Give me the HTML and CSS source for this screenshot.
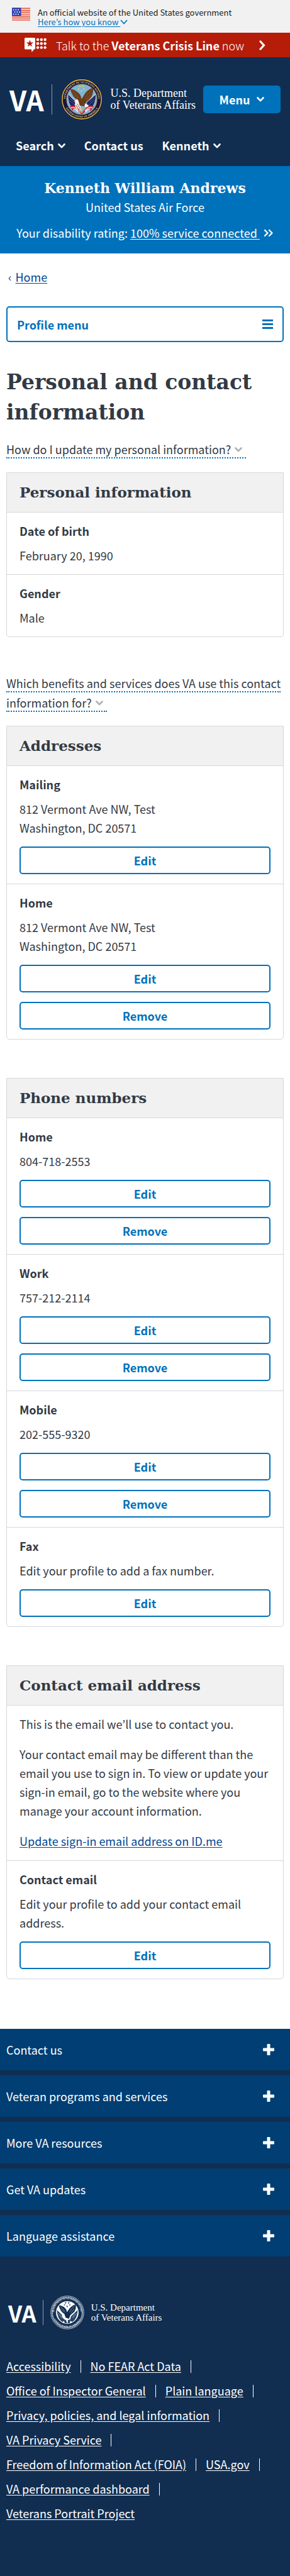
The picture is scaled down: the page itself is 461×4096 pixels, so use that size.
FILE: index.html
```html
<!DOCTYPE html>
<html lang="en">
<head>
<meta charset="utf-8">
<meta name="viewport" content="width=device-width, initial-scale=1">
<title>Personal and contact information | Veterans Affairs</title>
<link rel="stylesheet" href="styles.css">
</head>
<body>
<svg class="defs" aria-hidden="true">
  <symbol id="chevron" viewBox="0 0 12 8"><path d="M1.500 1.500 6 6.200 10.500 1.500" fill="none" stroke="currentColor" stroke-width="2.600" stroke-linecap="round" stroke-linejoin="round"/></symbol>
  <symbol id="plus" viewBox="0 0 18 18"><path d="M7.500 0h3q1 0 1 1v5.500H17q1 0 1 1v3q0 1-1 1h-5.500V17q0 1-1 1h-3q-1 0-1-1v-5.500H1q-1 0-1-1v-3q0-1 1-1h5.500V1q0-1 1-1z" fill="currentColor"/></symbol>
  <symbol id="star" viewBox="-5 -5 10 10"><path d="M0-5 1.200-1.600 4.800-1.600 1.900.6 2.900 4 0 1.900-2.900 4-1.900.6-4.800-1.600-1.200-1.600z" fill="currentColor"/></symbol>
</svg>

<div class="gov-banner">
  <svg class="flag" viewBox="0 0 30 21" aria-hidden="true">
    <path fill="#fff" d="M0 0h30v21H0z"/>
    <path stroke="#e0492f" stroke-width="1.700" d="M0 .9h30M0 4.100h30M0 7.300h30M0 10.500h30M0 13.700h30M0 16.900h30M0 20.100h30"/>
    <path fill="#2a3fb0" d="M0 0h15v13.500H0z"/>
    <path stroke="#fff" stroke-width="1.700" stroke-dasharray="1.700 2.200" d="M1.800 3.400h10.500M3.800 7h10.500M1.800 10.600h10.500"/>
  </svg>
  <div class="gov-text">
    <span>An official website of the United States government</span>
    <button type="button" class="gov-toggle"><span class="u">Here’s how you know </span><svg class="thin" viewBox="0 0 12 8"><path d="M1 1 6 6.500 11 1" fill="none" stroke="currentColor" stroke-width="1.700"/></svg></button>
  </div>
</div>

<a class="crisis" href="#crisis">
  <svg class="crisis-icon" viewBox="0 0 35 23" aria-hidden="true">
    <path fill="#fff" d="M1.500 0H15.500Q17 0 17 1.500V17Q17 18.500 15.500 18.500H15L11.500 23 11 18.500H1.500Q0 18.500 0 17V1.500Q0 0 1.500 0z"/>
    <use href="#star" x="2.500" y="3.500" width="12" height="12" color="#b51d09"/>
    <g fill="#fff"><circle cx="21" cy="3" r="2.200"/><circle cx="26.800" cy="3" r="2.200"/><circle cx="32.600" cy="3" r="2.200"/><circle cx="21" cy="9.300" r="2.200"/><circle cx="26.800" cy="9.300" r="2.200"/><circle cx="32.600" cy="9.300" r="2.200"/><circle cx="21" cy="15.600" r="2.200"/><circle cx="26.800" cy="15.600" r="2.200"/><circle cx="32.600" cy="15.600" r="2.200"/></g>
  </svg>
  <span>Talk to the <b>Veterans Crisis Line</b> now</span>
  <svg class="crisis-arrow" viewBox="0 0 10 16"><path d="M2 2 7.500 8 2 14" fill="none" stroke="currentColor" stroke-width="3.200" stroke-linecap="round"/></svg>
</a>

<header class="site-header">
  <div class="brand-row">
    <a class="brand" href="#home" aria-label="VA home">
      <span class="va">VA</span>
      <svg class="seal" viewBox="0 0 108 108" aria-hidden="true">
        <defs>
          <path id="arc-top" d="M11.500 54a42.500 42.500 0 0 1 85 0"/>
          <path id="arc-bottom" d="M6.500 54a47.500 47.500 0 0 0 95 0"/>
        </defs>
        <circle cx="54" cy="54" r="53.500" fill="#1b1440"/>
        <circle cx="54" cy="54" r="51" fill="none" stroke="#d9b23c" stroke-width="2.600"/>
        <circle cx="54" cy="54" r="39.500" fill="#7fb5d3" stroke="#c9a43a" stroke-width="1"/>
        <g class="seal-text" fill="#dccb86">
          <text><textPath href="#arc-top" startOffset="50%" text-anchor="middle">DEPARTMENT OF VETERANS AFFAIRS</textPath></text>
          <text><textPath href="#arc-bottom" startOffset="50%" text-anchor="middle">UNITED STATES OF AMERICA</textPath></text>
        </g>
        <g color="#f2d45c"><use href="#star" x="46" y="17" width="6" height="6"/><use href="#star" x="54" y="17" width="6" height="6"/><use href="#star" x="43" y="24" width="6" height="6"/><use href="#star" x="57" y="24" width="6" height="6"/><use href="#star" x="50" y="29" width="6" height="6"/></g>
        <path fill="#1f2560" d="M19 41 42 62 44 76 26 72Q18 60 19 41zM90 41 68 60 66 76 82 72Q90 60 90 41z"/>
        <path stroke="#fff" stroke-width="1.300" stroke-dasharray="1.300 3" d="M22 50 34 62M22 57 36 69M28 52 38 61M86 50 74 62M86 57 72 69M81 50 72 58"/>
        <path stroke="#fff" stroke-width="1.500" d="M19 41 42 62M90 41 68 60"/>
        <path fill="#c3273b" d="M23 72Q32 68 42 74L54 90 66 74Q76 68 85 72L78 84Q66 76 62 86L54 94 46 86Q42 76 30 83z"/>
        <path stroke="#fff" stroke-width="1.800" fill="none" d="M26 76Q36 72 46 84M32 80Q38 78 44 87M82 76Q72 72 62 84M76 80Q70 78 64 87"/>
        <path fill="#6a3b1c" d="M24 27Q36 28 45 37Q52 43 53 53Q58 47 61 41Q68 29 82 24Q86 34 79 48Q74 56 66 60L60 72 48 70 44 55Q30 51 24 27z"/>
        <path stroke="#9b673a" stroke-width="1" fill="none" d="M28 31Q40 38 46 52M30 38Q38 43 43 51M80 29Q68 38 62 52M80 37Q72 44 66 56M77 46 68 57"/>
        <path fill="#f5f3ee" d="M35 60Q36 54 43 54L46 60 48 68Q54 78 51 84L39 76Q34 68 37 63z"/>
        <path stroke="#c3273b" stroke-width="1.600" d="M38 68 47 82M42 65 50 79"/>
        <path fill="#f5f3ee" d="M62 65Q68 66 72 70Q70 76 62 74z"/>
        <path fill="#e0b63a" d="M35 58 38 57 36 61zM47 77 50 76 50 91 47 91zM53 76 56 76 54 90 52 90z"/>
      </svg>
      <span class="dept">U.S. Department<br>of Veterans Affairs</span>
    </a>
    <button type="button" class="menu-btn">Menu <svg class="chev"><use href="#chevron"/></svg></button>
  </div>
  <nav class="quick-nav">
    <button type="button">Search <svg class="chev"><use href="#chevron"/></svg></button>
    <a href="#contact">Contact us</a>
    <button type="button">Kenneth <svg class="chev"><use href="#chevron"/></svg></button>
  </nav>
</header>

<section class="name-tag">
  <p class="name">Kenneth William Andrews</p>
  <p class="branch">United States Air Force</p>
  <p class="rating"><span>Your disability rating: <a href="#rating">100% service connected&nbsp;</a></span>
    <svg class="dbl" viewBox="0 0 16 13"><path d="M2 2 6.500 6.500 2 11M9 2 13.500 6.500 9 11" fill="none" stroke="currentColor" stroke-width="2.300" stroke-linecap="round" stroke-linejoin="round"/></svg></p>
</section>

<main class="content">
  <nav class="crumb"><span>‹</span> <a href="#home">Home</a></nav>
  <button type="button" class="profile-menu">Profile menu
    <svg class="bars" viewBox="0 0 17 15"><path fill="currentColor" d="M0 0h17v3H0zM0 6h17v3H0zM0 12h17v3H0z"/></svg></button>
  <h1>Personal and contact information</h1>

  <div class="info first"><button type="button"><span>How do I update my personal information? <svg class="chev"><use href="#chevron"/></svg></span></button></div>

  <section class="card">
    <h2>Personal information</h2>
    <div class="row"><h3>Date of birth</h3><p>February 20, 1990</p></div>
    <div class="row"><h3>Gender</h3><p>Male</p></div>
  </section>

  <div class="info second"><button type="button"><span>Which benefits and services does VA use this contact information for? <svg class="chev"><use href="#chevron"/></svg></span></button></div>

  <section class="card">
    <h2>Addresses</h2>
    <div class="row"><h3>Mailing</h3><p>812 Vermont Ave NW, Test<br>Washington, DC 20571</p>
      <div class="actions"><button type="button">Edit</button></div></div>
    <div class="row"><h3>Home</h3><p>812 Vermont Ave NW, Test<br>Washington, DC 20571</p>
      <div class="actions"><button type="button">Edit</button><button type="button">Remove</button></div></div>
  </section>

  <section class="card">
    <h2>Phone numbers</h2>
    <div class="row"><h3>Home</h3><p>804-718-2553</p>
      <div class="actions"><button type="button">Edit</button><button type="button">Remove</button></div></div>
    <div class="row"><h3>Work</h3><p>757-212-2114</p>
      <div class="actions"><button type="button">Edit</button><button type="button">Remove</button></div></div>
    <div class="row"><h3>Mobile</h3><p>202-555-9320</p>
      <div class="actions"><button type="button">Edit</button><button type="button">Remove</button></div></div>
    <div class="row"><h3>Fax</h3><p>Edit your profile to add a fax number.</p>
      <div class="actions"><button type="button">Edit</button></div></div>
  </section>

  <section class="card">
    <h2>Contact email address</h2>
    <div class="row prose">
      <p>This is the email we’ll use to contact you.</p>
      <p>Your contact email may be different than the email you use to sign in. To view or update your sign-in email, go to the website where you manage your account information.</p>
      <p><a href="#idme">Update sign-in email address on ID.me</a></p>
    </div>
    <div class="row"><h3>Contact email</h3><p>Edit your profile to add your contact email address.</p>
      <div class="actions"><button type="button">Edit</button></div></div>
  </section>
</main>

<footer class="footer">
  <div class="accordion">
    <button type="button">Contact us <svg><use href="#plus"/></svg></button>
    <button type="button">Veteran programs and services <svg><use href="#plus"/></svg></button>
    <button type="button">More VA resources <svg><use href="#plus"/></svg></button>
    <button type="button">Get VA updates <svg><use href="#plus"/></svg></button>
    <button type="button">Language assistance <svg><use href="#plus"/></svg></button>
  </div>
  <a class="brand small" href="#home" aria-label="VA home">
    <span class="va">VA</span>
    <svg class="seal" viewBox="0 0 108 108" aria-hidden="true">
      <circle cx="54" cy="54" r="52.500" fill="#112e51" stroke="#e6eaef" stroke-width="1.500"/>
      <circle cx="54" cy="54" r="48" fill="none" stroke="#cdd5de" stroke-width="4.500" stroke-dasharray="1.700 1"/>
      <circle cx="54" cy="54" r="35.500" fill="#fff" stroke="#e6eaef"/>
      <g class="seal-text" fill="#e6eaef">
        <text><textPath href="#arc-top" startOffset="50%" text-anchor="middle">DEPARTMENT OF VETERANS AFFAIRS</textPath></text>
        <text><textPath href="#arc-bottom" startOffset="50%" text-anchor="middle">UNITED STATES OF AMERICA</textPath></text>
      </g>
      <g color="#112e51"><use href="#star" x="45" y="20" width="7" height="7"/><use href="#star" x="55" y="20" width="7" height="7"/><use href="#star" x="42" y="27" width="6" height="6"/><use href="#star" x="59" y="27" width="6" height="6"/><use href="#star" x="50" y="31" width="7" height="7"/></g>
      <path fill="#2a4465" d="M21 46 42 66 46 80 38 84Q22 74 21 46zM87 46 66 66 62 80 70 84Q86 74 87 46z"/>
      <path fill="#112e51" d="M27 31Q40 32 47 40Q52 45 53 53Q57 46 62 40Q70 31 81 28Q83 42 76 52L64 62 59 74 48 70 44 58Q30 50 27 31z"/>
      <path stroke="#c9d2dc" stroke-width="1" fill="none" d="M31 35Q42 42 47 53M33 43 43 52M77 33Q67 41 61 53M76 42 65 56M25 56 36 72M30 58 38 70M83 56 72 72M78 58 70 70"/>
      <path fill="#fff" d="M37 60Q41 56 45 60L50 76 42 74Q36 68 37 60z"/>
      <path fill="#2a4465" d="M42 76 50 78 53 88 46 88zM56 78 64 76 62 88 55 88z"/>
    </svg>
    <span class="dept">U.S. Department<br>of Veterans Affairs</span>
  </a>
  <ul class="links">
    <li><a href="#a">Accessibility</a></li>
    <li><a href="#b">No FEAR Act Data</a></li>
    <li><a href="#c">Office of Inspector General</a></li>
    <li><a href="#d">Plain language</a></li>
    <li><a href="#e">Privacy, policies, and legal information</a></li>
    <li><a href="#f">VA Privacy Service</a></li>
    <li><a href="#g">Freedom of Information Act (FOIA)</a></li>
    <li><a href="#h">USA.gov</a></li>
    <li><a href="#i">VA performance dashboard</a></li>
    <li><a href="#j">Veterans Portrait Project</a></li>
  </ul>
</footer>
</body>
</html>
```
FILE: styles.css
```css
:root {
  --navy: #112e51;
  --blue: #0071bb;
  --ink: #323a45;
  --line: #d6d7d9;
  --grey: #f1f1f1;
  --link: #004795;
  --sans: "Noto Sans CJK KR", "Noto Sans", sans-serif;
  --slab: "DejaVu Serif", serif;
}
* { box-sizing: border-box; }
body { margin: 0; background: #fff; color: var(--ink); font: 18px/30px var(--sans); }
h1, h2, h3, p, ul { margin: 0; padding: 0; }
button { font: inherit; color: inherit; background: none; border: 0; padding: 0; margin: 0; text-align: left; }
a { color: inherit; text-underline-offset: 2px; }
.defs { position: absolute; width: 0; height: 0; }
.chev { width: 12px; height: 8px; vertical-align: 3px; }

.gov-banner { display: flex; gap: 12px; height: 52px; padding: 12px 19px; background: var(--grey); font-size: 13px; line-height: 15px; color: #212121; }
.flag { width: 29px; height: 21px; }
.gov-text { display: flex; flex-direction: column; align-items: flex-start; }
.gov-toggle { display: flex; align-items: center; color: var(--blue); }
.gov-toggle .u { text-decoration: underline; text-underline-offset: 2px; white-space: pre; }
.thin { width: 12px; height: 8px; }

.crisis { display: flex; align-items: center; justify-content: center; height: 39px; background: #b51d09; color: #fff; text-decoration: none; font-weight: 300; }
.crisis b { font-weight: 700; }
.crisis-icon { width: 35px; height: 23px; margin-right: 15px; }
.crisis-arrow { width: 10px; height: 16px; margin-left: 24px; }

.site-header { background: var(--navy); color: #fff; padding: 34px 15px 18px; }
.brand-row { display: flex; align-items: center; justify-content: space-between; }
.brand { display: flex; align-items: center; text-decoration: none; color: #fff; }
.va { font-weight: 700; font-size: 44px; line-height: 48px; padding-right: 12px; border-right: 1px solid #8a99ad; }
.seal { width: 66px; height: 66px; margin: 0 13px 0 14px; }
.seal-text { font: 700 7px "Liberation Serif", serif; }
.dept { font: 18px/19px "Liberation Serif", serif; white-space: nowrap; }
.menu-btn { display: flex; align-items: center; justify-content: center; gap: 11px; width: 123px; height: 44px; border-radius: 5px; background: var(--blue); font-weight: 700; }
.quick-nav { display: flex; gap: 30px; padding: 25px 10px 0; font-weight: 700; }
.quick-nav a { text-decoration: none; }
.quick-nav .chev { margin-left: 2px; }

.name-tag { background: var(--blue); color: #fff; text-align: center; padding: 20px 16px 18px; }
.name { font: 700 22px/30px var(--slab); }
.rating { margin-top: 11px; display: flex; align-items: center; justify-content: center; gap: 6px; white-space: nowrap; }
.dbl { width: 16px; height: 13px; }

.content { padding: 22px 10px 79px; }
.crumb { padding: 0 3px; color: var(--link); }
.crumb a { margin-left: 2px; }
.profile-menu { display: flex; justify-content: space-between; align-items: center; width: 100%; height: 57px; margin-top: 32px; padding: 0 15px; border: 2px solid var(--blue); border-radius: 5px; color: var(--blue); font-weight: 700; }
.bars { width: 17px; height: 15px; }
h1 { font: 700 33px/48px var(--slab); margin-top: 40px; }
.info { line-height: 31px; }
.info button { display: block; }
.info span { border-bottom: 2px dotted var(--blue); }
.info .chev { color: #aeb0b5; margin: 0 6px 0 2px; }
.info.first { margin: 19px 0 21px; }
.info.second { margin: 58px 0 21px; }

.card { border: 1px solid var(--line); border-radius: 0 0 5px 5px; }
.card + .card { margin-top: 61px; }
h2 { background: var(--grey); font: 700 23px/30px var(--slab); padding: 16px 20px; }
.row { border-top: 1px solid var(--line); padding: 14px 20px 15px; }
h3 { font-size: 18px; line-height: 30px; margin-bottom: 9px; }
.actions { display: flex; flex-direction: column; gap: 15px; margin-top: 15px; }
.actions button { height: 44px; border: 2px solid var(--blue); border-radius: 5px; color: var(--blue); font-weight: 700; text-align: center; }
.prose { display: flex; flex-direction: column; gap: 18px; padding-bottom: 16px; }
.prose a { color: var(--link); }

.footer { background: var(--navy); color: #fff; padding-bottom: 80px; }
.accordion { display: grid; gap: 8px; }
.accordion button { display: flex; justify-content: space-between; align-items: center; height: 66px; padding: 0 25px 0 10px; background: #003e73; }
.accordion svg { width: 18px; height: 18px; }
.small { padding: 62px 13px 0; }
.small .va { font-size: 36px; line-height: 40px; padding-right: 10px; }
.small .seal { width: 54px; height: 54px; margin: 0 11px; }
.small .dept { font-size: 15px; line-height: 16px; }
.links { list-style: none; display: flex; flex-wrap: wrap; padding: 0 10px; margin-top: 39px; }
.links li { display: flex; align-items: center; line-height: 39px; white-space: nowrap; }
.links li:not(:last-child)::after { content: ""; width: 1px; height: 20px; margin: 0 15px; background: #fff; }
```
